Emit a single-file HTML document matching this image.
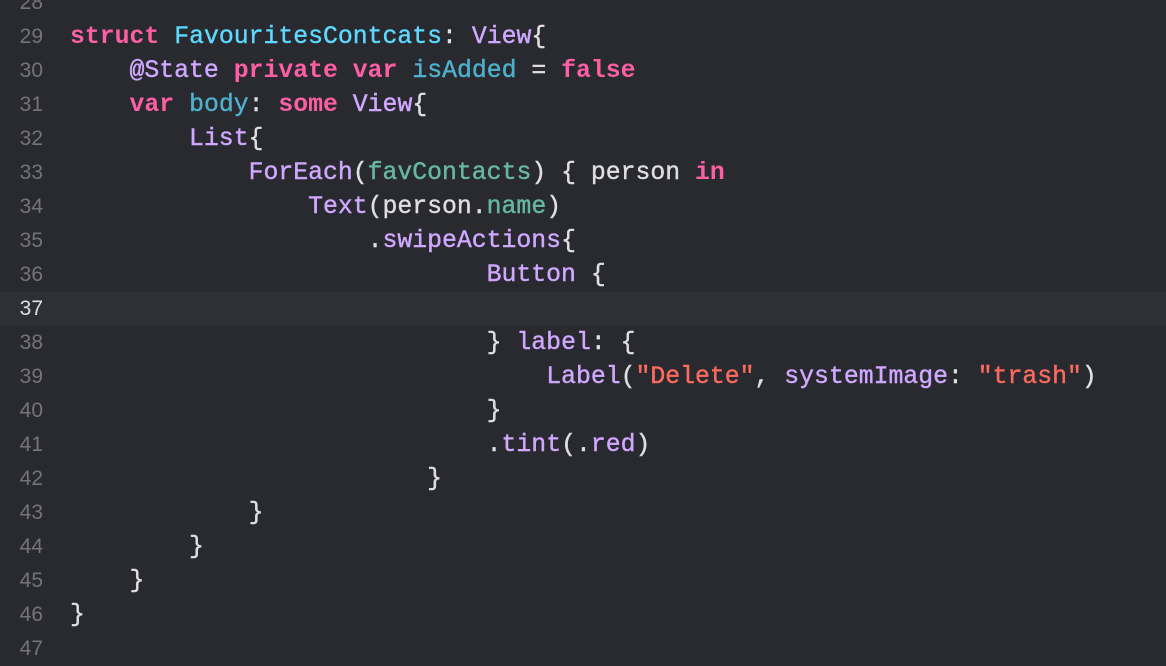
<!DOCTYPE html>
<html><head><meta charset="utf-8"><style>
html,body{margin:0;padding:0;background:#292a30;width:1166px;height:644px;overflow:hidden}
.wrap{position:absolute;top:-14px;left:0;width:1166px}
.l{height:34px;line-height:34px;position:relative;white-space:pre;font-family:"Liberation Mono",monospace;font-size:24.8px;color:#dfdfe0;-webkit-text-stroke:0.4px currentColor}
.n{position:absolute;left:0;width:43px;text-align:right;font-family:"Liberation Sans",sans-serif;font-size:21px;color:#747478;-webkit-text-stroke:0}
.c{position:absolute;left:70px}
.cur{background:#2f3037}
.cur .n{color:#dfdfe0}
.k{color:#fc5fa3;font-weight:bold;-webkit-text-stroke:0}
.t{color:#5dd8ff}
.ty{color:#d0a8ff}
.p{color:#4eb0cc}
.g{color:#67b7a4}
.s{color:#fc6a5d}
</style></head><body><div class="wrap">
<div class="l"><span class="n">28</span><span class="c"></span></div>
<div class="l"><span class="n">29</span><span class="c"><span class="k">struct</span> <span class="t">FavouritesContcats</span>: <span class="ty">View</span>{</span></div>
<div class="l"><span class="n">30</span><span class="c">    <span class="ty">@State</span> <span class="k">private</span> <span class="k">var</span> <span class="p">isAdded</span> = <span class="k">false</span></span></div>
<div class="l"><span class="n">31</span><span class="c">    <span class="k">var</span> <span class="p">body</span>: <span class="k">some</span> <span class="ty">View</span>{</span></div>
<div class="l"><span class="n">32</span><span class="c">        <span class="ty">List</span>{</span></div>
<div class="l"><span class="n">33</span><span class="c">            <span class="ty">ForEach</span>(<span class="g">favContacts</span>) { person <span class="k">in</span></span></div>
<div class="l"><span class="n">34</span><span class="c">                <span class="ty">Text</span>(person.<span class="g">name</span>)</span></div>
<div class="l"><span class="n">35</span><span class="c">                    .<span class="ty">swipeActions</span>{</span></div>
<div class="l"><span class="n">36</span><span class="c">                            <span class="ty">Button</span> {</span></div>
<div class="l cur"><span class="n">37</span><span class="c"></span></div>
<div class="l"><span class="n">38</span><span class="c">                            } <span class="ty">label</span>: {</span></div>
<div class="l"><span class="n">39</span><span class="c">                                <span class="ty">Label</span>(<span class="s">"Delete"</span>, <span class="ty">systemImage</span>: <span class="s">"trash"</span>)</span></div>
<div class="l"><span class="n">40</span><span class="c">                            }</span></div>
<div class="l"><span class="n">41</span><span class="c">                            .<span class="ty">tint</span>(.<span class="ty">red</span>)</span></div>
<div class="l"><span class="n">42</span><span class="c">                        }</span></div>
<div class="l"><span class="n">43</span><span class="c">            }</span></div>
<div class="l"><span class="n">44</span><span class="c">        }</span></div>
<div class="l"><span class="n">45</span><span class="c">    }</span></div>
<div class="l"><span class="n">46</span><span class="c">}</span></div>
<div class="l"><span class="n">47</span><span class="c"></span></div>
</div></body></html>
